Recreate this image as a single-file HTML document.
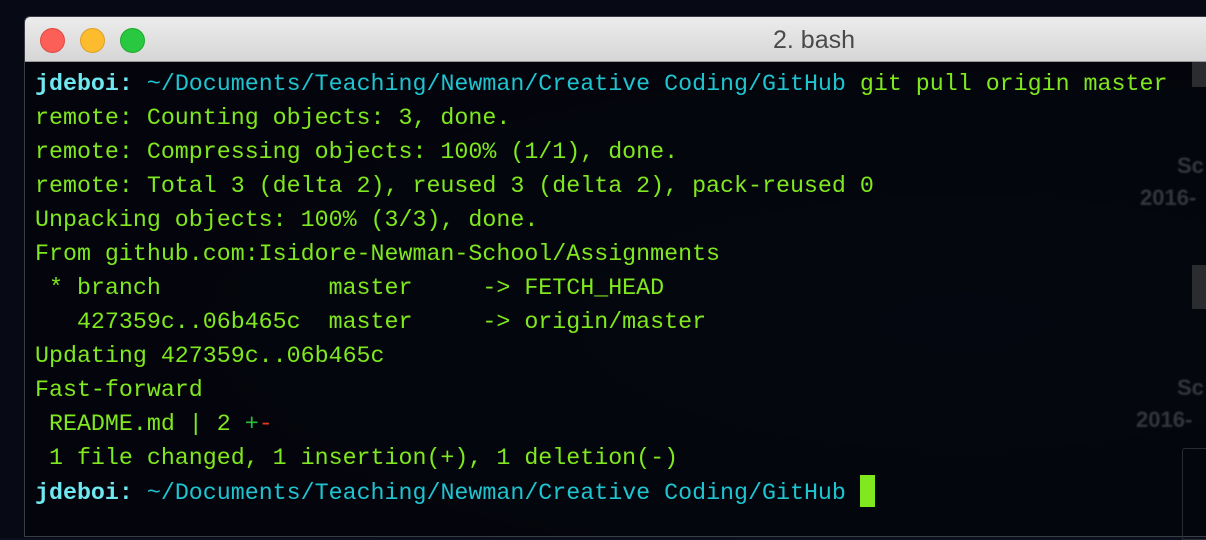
<!DOCTYPE html><html><head><style>
body{margin:0;width:1206px;height:538px;overflow:hidden;background:#0b1020;position:relative;font-family:"Liberation Mono",monospace}
.bg{position:absolute;inset:0;background:radial-gradient(ellipse at 80% 60%,#121a30 0%,#070a14 70%)}
.win{position:absolute;left:24px;top:16px;width:1230px;height:519px;border-radius:6px 6px 0 0;overflow:hidden;border:1px solid #3a3d44}
.title{height:44px;background:linear-gradient(#ececec,#d6d6d6);border-bottom:1px solid #9a9a9a;position:relative;font-family:"Liberation Sans",sans-serif;font-size:25px;color:#4a4a4a}
.title span{position:absolute;left:748px;top:9px}
.dot{position:absolute;top:11px;width:23px;height:23px;border-radius:50%}
.term{position:absolute;top:45px;left:0;right:0;bottom:0;background:rgba(3,5,10,.85)}
pre{margin:0;position:absolute;left:10px;top:5px;font-size:23.3px;line-height:34px;color:#7fe81e;font-family:"Liberation Mono",monospace}
.u{color:#6fe8f0;font-weight:bold}.p{color:#1ec4d0}.r{color:#e23a1e}
.cur{display:inline-block;width:15px;height:32px;background:#7fe81e;vertical-align:-8px}
.side{position:absolute;color:#34363b;font-family:"Liberation Sans",sans-serif;font-weight:bold;font-size:22px;filter:blur(.8px)}
</style></head><body><div class="bg"></div>
<div class="win"><div class="title">
<div class="dot" style="left:15px;background:#fc5f57;border:1px solid #df4942"></div>
<div class="dot" style="left:55px;background:#fdbc2e;border:1px solid #dea024"></div>
<div class="dot" style="left:95px;background:#28c840;border:1px solid #1eaa2e"></div>
<span>2. bash</span></div>
<div class="term"><pre><span class="u">jdeboi:</span> <span class="p">~/Documents/Teaching/Newman/Creative Coding/GitHub</span> git pull origin master
remote: Counting objects: 3, done.
remote: Compressing objects: 100% (1/1), done.
remote: Total 3 (delta 2), reused 3 (delta 2), pack-reused 0
Unpacking objects: 100% (3/3), done.
From github.com:Isidore-Newman-School/Assignments
 * branch            master     -> FETCH_HEAD
   427359c..06b465c  master     -> origin/master
Updating 427359c..06b465c
Fast-forward
 README.md | 2 <span style="color:#27c03a">+</span><span class="r">-</span>
 1 file changed, 1 insertion(+), 1 deletion(-)
<span class="u">jdeboi:</span> <span class="p">~/Documents/Teaching/Newman/Creative Coding/GitHub</span> <span class="cur"></span></pre></div></div>
<div class="side" style="left:1177px;top:153px">Sc</div>
<div class="side" style="left:1140px;top:185px">2016-</div>
<div class="side" style="left:1177px;top:375px">Sc</div>
<div class="side" style="left:1136px;top:407px">2016-</div>
<div style="position:absolute;left:1192px;top:62px;width:14px;height:25px;background:#2a2c30"></div>
<div style="position:absolute;left:1192px;top:265px;width:14px;height:44px;background:#2a2c30"></div>
<div style="position:absolute;left:1182px;top:448px;width:24px;height:90px;border:1px solid #2a2c30;border-right:0;border-radius:3px 0 0 0"></div>
</body></html>
